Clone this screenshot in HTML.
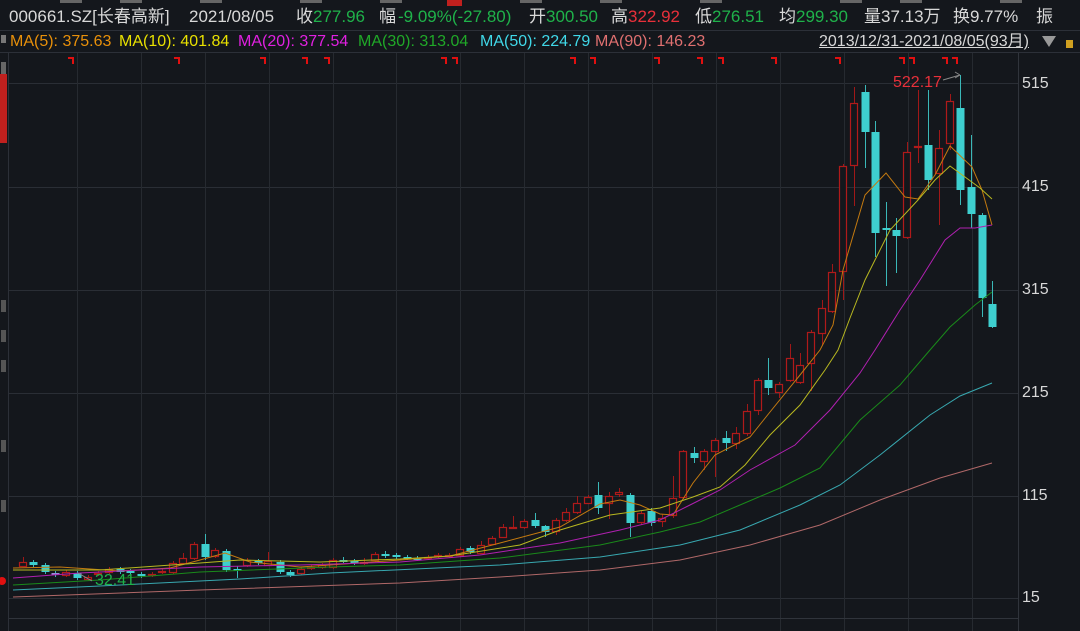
<!DOCTYPE html>
<html><head><meta charset="utf-8">
<style>
html,body{margin:0;padding:0;background:#14171c;width:1080px;height:631px;overflow:hidden}
body{position:relative;font-family:"Liberation Sans","Noto Sans CJK SC",sans-serif;color:#d0d0d0}
.t{position:absolute;white-space:nowrap;font-size:16px;line-height:18px}
.h{font-size:17px;top:8px}
.g{color:#1fb24a}.r{color:#e8303a}.w{color:#d8d8d8}
svg{position:absolute;left:0;top:0}
</style></head><body>
<svg id="s" width="1080" height="631" xmlns="http://www.w3.org/2000/svg"></svg>
<div class="t w h" style="left:9px">000661.SZ[长春高新]</div>
<div class="t w h" style="left:189px">2021/08/05</div>
<div class="t w h" style="left:296px">收<span class="g">277.96</span></div>
<div class="t w h" style="left:379px">幅<span class="g" style="margin-left:2px">-9.09%(-27.80)</span></div>
<div class="t w h" style="left:529px">开<span class="g">300.50</span></div>
<div class="t w h" style="left:611px">高<span class="r">322.92</span></div>
<div class="t w h" style="left:695px">低<span class="g">276.51</span></div>
<div class="t w h" style="left:779px">均<span class="g">299.30</span></div>
<div class="t w h" style="left:864px">量37.13万</div>
<div class="t w h" style="left:953px">换9.77%</div>
<div class="t w h" style="left:1036px">振</div>
<div class="t" style="left:10px;top:33px;color:#e8900a">MA(5): 375.63</div>
<div class="t" style="left:119px;top:33px;color:#e8e000">MA(10): 401.84</div>
<div class="t" style="left:238px;top:33px;color:#e020e0">MA(20): 377.54</div>
<div class="t" style="left:358px;top:33px;color:#20a828">MA(30): 313.04</div>
<div class="t" style="left:480px;top:33px;color:#40d8e8">MA(50): 224.79</div>
<div class="t" style="left:595px;top:33px;color:#e07070">MA(90): 146.23</div>
<div class="t w" style="left:819px;top:33px;text-decoration:underline">2013/12/31-2021/08/05(93月)</div>
<div class="t r" style="left:893px;top:74px">522.17</div>
<div class="t g" style="left:95px;top:572px">32.41</div>
<div class="t w" style="left:1022px;top:75px">515</div>
<div class="t w" style="left:1022px;top:178px">415</div>
<div class="t w" style="left:1022px;top:281px">315</div>
<div class="t w" style="left:1022px;top:384px">215</div>
<div class="t w" style="left:1022px;top:487px">115</div>
<div class="t w" style="left:1022px;top:589px">15</div>
<script>
var s=document.getElementById('s'),h='';
function L(x1,y1,x2,y2,c,w){h+='<line x1="'+x1+'" y1="'+y1+'" x2="'+x2+'" y2="'+y2+'" stroke="'+c+'" stroke-width="'+(w||1)+'"/>';}
function R(x,y,w,hh,f,st){h+='<rect x="'+x+'" y="'+y+'" width="'+w+'" height="'+hh+'" fill="'+f+'"'+(st?' stroke="'+st+'" stroke-width="1"':'')+'/>';}
L(0,30.5,1080,30.5,'#2c3038');L(0,52.5,1080,52.5,'#2c3038');L(8.5,52,8.5,631,'#2c3038');
R(0,74,7,69,'#c0201e');
[83,187,290,393,496,598].forEach(function(y){L(9,y+.5,1018,y+.5,'#2a2e35');});
for(var x=77;x<1000;x+=63.9){L(Math.round(x)+.5,53,Math.round(x)+.5,631,'#262a30');}
L(1018.5,53,1018.5,631,'#30343b');L(9,618.5,1018,618.5,'#30343b');
R(447,0,15,6,'#c0201e');
[60,120,200,300,380,520,600,700,840,900,1000].forEach(function(x){R(x,0,22,3,'#666');});
[71,177,263,305,327,444,455,573,593,657,700,721,774,838,902,912,945,955].forEach(function(x){R(x-3,57,6,2,'#e01010');R(x+1,57,2,7,'#e01010');});
var C=[[23,'r',562,566,557,567],[33,'c',562,565],[45,'c',565,572,563,574],[55,'p',573,575],[66,'r',572,575],[77,'c',573,578],[88,'r',577,579],[98,'r',573,574],[109,'r',569,572],[120,'c',569,572],[130,'c',571,573],[141,'c',574,576],[152,'r',574,575],[162,'r',571,572],[173,'r',563,572],[183,'r',558,563,553,565],[194,'r',544,558],[205,'c',544,557,534,560],[215,'r',550,556],[226,'c',551,570],[237,'c',569,571,566,578],[247,'r',560,565],[258,'c',561,563],[268,'r',561,565,552,566],[280,'c',562,572],[290,'c',572,575],[301,'r',569,573],[311,'r',567,568],[322,'r',565,567],[333,'r',560,567],[343,'c',560,561,557,563],[354,'c',561,563],[364,'r',562,563,558,565],[375,'r',554,560],[385,'c',554,555,551,558],[396,'c',555,557],[407,'c',557,558],[417,'c',558,559],[428,'r',557,558],[438,'r',555,556],[449,'r',555,556],[460,'r',549,555],[470,'c',548,552],[481,'r',545,553,541,554],[492,'r',538,544,536,545],[503,'r',527,537,524,538],[513,'r',527,528,516,529],[524,'r',521,527],[535,'c',520,526,513,528],[545,'c',526,532,525,537],[556,'r',520,531,518,535],[566,'r',512,520,508,522],[577,'r',503,512,496,514],[588,'r',497,503,495,504],[598,'c',495,508,482,514],[609,'r',496,503,492,519],[619,'r',492,494,488,497],[630,'c',495,523,493,537],[641,'r',513,522,511,525],[651,'c',511,523,508,526],[662,'r',518,521,514,527],[673,'r',498,515,476,518],[683,'r',451,497,450,499],[694,'c',453,458,447,463],[704,'r',451,461,449,470],[715,'r',440,451,438,477],[726,'c',438,443,431,451],[736,'r',433,443,427,449],[747,'r',411,433,404,436],[758,'r',380,410,378,415],[768,'c',380,388,358,395],[779,'r',384,392,382,398],[790,'r',358,380,344,382],[800,'r',365,382,353,384],[811,'r',332,363,330,391],[822,'r',308,333,300,345],[832,'r',272,311,264,313],[843,'r',166,271,164,300],[854,'r',103,165,87,206],[865,'c',92,132,85,168],[875,'c',132,233,121,257],[886,'c',228,229,202,286],[896,'c',230,236,218,273],[907,'r',152,237,142,239],[918,'r',146,147,90,163],[928,'c',145,180,90,190],[939,'r',148,173,130,225],[950,'r',101,143,94,150],[960,'c',108,190,75,205],[971,'c',187,214,135,228],[982,'c',215,298,213,317],[992,'c',304,327,281,328]];
C.forEach(function(c){var x=c[0],t=c[1],a=c[2],b=c[3],wt=c[4]||a-2,wb=c[5]||b+2;
 var col=t=='r'?'#b01a1a':(t=='p'?'#9a8ad8':'#3ecfcf');
 L(x+.5,wt,x+.5,wb,t=='r'?'#a01818':'#3ab8b8');
 var hh=Math.max(b-a,1);
 if(t=='r'){h+='<rect x="'+(x-3.5)+'" y="'+(a+.5)+'" width="7" height="'+hh+'" fill="#14171c" stroke="#b01a1a" stroke-width="1.2"/>';}
 else R(x-3.5,a,8,hh+(hh<2?1:0),col);});
function P(pts,c){h+='<polyline fill="none" stroke="'+c+'" stroke-width="1" points="'+pts+'"/>';}
P('13,568 60,567 120,571 170,568 200,560 225,553 250,562 300,567 330,565 400,560 450,556 500,543 560,527 600,504 620,500 640,505 660,514 673,515 693,483 715,455 750,437 770,412 800,375 820,350 833,325 843,270 865,195 886,173 905,197 918,199 935,175 950,146 972,167 982,190 992,225','#c47a10');
P('13,570 100,570 200,563 240,560 320,562 400,559 450,556 520,545 560,530 610,515 660,508 693,497 720,487 745,465 770,435 800,405 825,370 838,350 850,318 865,280 890,230 918,200 935,180 950,166 980,188 992,199','#b8b820');
P('13,578 80,573 200,567 300,565 400,562 480,555 560,543 620,530 660,520 690,505 720,490 750,470 795,445 830,410 860,373 875,350 900,310 920,280 945,240 960,228 975,228 992,225','#b020b0');
P('13,585 100,580 200,572 330,567 400,565 500,558 600,545 660,532 700,522 740,505 780,488 820,468 860,420 900,385 930,350 950,327 975,305 992,292','#1a8a1a');
P('13,590 100,586 240,579 330,573 500,565 600,557 680,545 740,530 800,505 840,485 880,455 930,415 960,396 992,383','#38a8b0');
P('13,597 200,590 400,583 500,577 600,570 680,560 750,545 820,525 880,500 940,478 992,463','#b06868');
L(943,80,960,75,'#888');L(955,72,960,75,'#888');L(955,78,960,75,'#888');
L(78,573,92,581,'#888');
h+='<polygon points="1042,36 1056,36 1049,47" fill="#999"/>';R(1066,40,7,8,'#d0a020');
R(1,35,5,8,'#777');R(1,62,5,12,'#666');R(1,300,5,12,'#555');R(1,330,5,12,'#555');R(1,360,5,12,'#555');R(1,440,5,12,'#555');R(1,500,5,12,'#555');
h+='<circle cx="2" cy="581" r="4" fill="#e01010"/>';
s.innerHTML=h;
</script>
</body></html>
